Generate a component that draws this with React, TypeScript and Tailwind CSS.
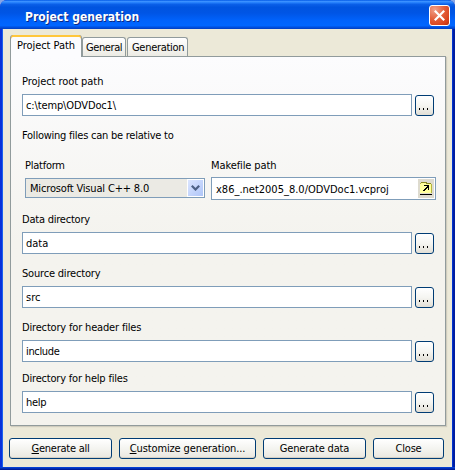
import type { ReactNode } from 'react';

function Label({ children, className = '' }: { children: ReactNode; className?: string }) {
  return <div className={`h-4 whitespace-nowrap pt-px leading-4 ${className}`}>{children}</div>;
}

function BrowseButton() {
  return (
    <button className="flex h-[21px] w-[19px] shrink-0 items-center justify-center gap-[3px] rounded-[3px] border border-[#003c74] bg-linear-to-b from-white via-[#f5f5f1] to-[#e2dfd6] pr-[2px] pt-[7px]">
      <i className="h-[2px] w-px bg-black" />
      <i className="h-[2px] w-px bg-black" />
      <i className="h-[2px] w-px bg-black" />
    </button>
  );
}

function PathField({ label, value, labelClass = '', valueClass = '' }: { label: string; value: string; labelClass?: string; valueClass?: string }) {
  return (
    <div>
      <Label className={labelClass}>{label}</Label>
      <div className="mt-[5px] flex items-end gap-[3px]">
        <div className={`h-[22px] w-[390px] whitespace-nowrap border border-[#7f9db9] bg-white pl-[3px] pt-px leading-[20px] ${valueClass}`}>{value}</div>
        <BrowseButton />
      </div>
    </div>
  );
}

function ActionButton({ children, className }: { children: ReactNode; className: string }) {
  return (
    <button className={`h-[21px] whitespace-nowrap rounded-[3px] border border-[#003c74] bg-linear-to-b from-white via-[#f4f4f0] to-[#e9e7df] text-center leading-[20px] shadow-[inset_0_-1px_0_#d6d0c5] ${className}`}>
      {children}
    </button>
  );
}

export default function App() {
  return (
    <div className="h-[470px] w-[455px] overflow-hidden bg-[#86a5e6] font-['DejaVu_Sans_Condensed','DejaVu_Sans',sans-serif] text-[11px] text-black">
      <div className="flex h-full flex-col overflow-hidden rounded-t-[7px] bg-linear-to-r from-[#0831d9] via-[#0855dd] to-[#001da0]">
        <header className="flex h-[29px] shrink-0 items-start justify-between bg-[linear-gradient(180deg,#0058e6_0%,#3b91ff_5%,#2580fb_9%,#0a5fe8_15%,#0054df_25%,#0055e5_45%,#0062fb_70%,#0066ff_88%,#0050e0_94%,#003dc0_100%)] pl-[25px] pr-[5px]">
          <h1 className="mt-[8px] whitespace-nowrap text-[12px] font-bold leading-[18px] tracking-[0.03px] text-white [text-shadow:1px_1px_#0b2a87]">Project generation</h1>
          <button className="mt-[5px] flex h-[21px] w-[21px] items-center justify-center rounded-[3px] border border-white bg-[radial-gradient(circle_at_25%_20%,#f0a08a,#e3603c_45%,#d8401a_80%,#b5300c)]">
            <svg width="11" height="11" viewBox="0 0 11 11" stroke="white" strokeWidth="2.2">
              <path d="M.8 .8L10.2 10.2M10.2 .8L.8 10.2" />
            </svg>
          </button>
        </header>
        <main className="mx-[3px] flex h-[438px] shrink-0 flex-col bg-[#ece9d8] pl-[6px] pt-[6px] shadow-[-1px_0_#1a60ee,1px_0_#0034d0,0_1px_#0a48e0]">
          <nav className="ml-px flex h-[21px] items-end">
            <div className="relative z-10 -mb-px h-[22px] w-[72px] self-start whitespace-nowrap rounded-t-[3px] border-x border-[#919b9c] bg-[#fcfcfe] pl-[6px] pt-px leading-[20px] tracking-[-0.06px] shadow-[inset_0_2px_#ffc73c,inset_0_1px_#e68b2c]">Project Path</div>
            <div className="h-[19px] w-[44px] whitespace-nowrap rounded-t-[3px] border border-b-0 border-[#919b9c] bg-linear-to-b from-white to-[#ecebe4] pl-[3px] pt-px leading-[18px] tracking-[-0.4px]">General</div>
            <div className="ml-px h-[19px] w-[61px] whitespace-nowrap rounded-t-[3px] border border-b-0 border-[#919b9c] bg-linear-to-b from-white to-[#ecebe4] pl-[4px] pt-px leading-[18px] tracking-[-0.3px]">Generation</div>
          </nav>
          <section className="ml-px h-[370px] w-[436px] border border-[#919b9c] bg-linear-to-b from-[#fcfcfe] to-[#f4f3ee] to-50% pl-[11px] pt-4 shadow-[1px_1px_1px_#cfccbe]">
            <PathField label="Project root path" value={'c:\\temp\\ODVDoc1\\'} labelClass="tracking-[-0.06px]" valueClass="tracking-[-0.13px]" />
            <Label className="mt-[11px] tracking-[-0.24px]">Following files can be relative to</Label>
            <div className="ml-[3px] mt-[14px] flex gap-[6px]">
              <div className="w-[180px]">
                <Label className="tracking-[-0.25px]">Platform</Label>
                <div className="mt-[5px] flex h-[20px] justify-between border border-[#7f9db9] bg-[#ebeae4] pl-[4px] leading-[18px]">
                  <span className="whitespace-nowrap pt-px tracking-[-0.17px]">Microsoft Visual C++ 8.0</span>
                  <span className="flex w-[17px] items-center justify-center border border-white bg-linear-to-br from-[#dce6ff] to-[#afc5f8]">
                    <svg width="9" height="6" viewBox="0 0 9 6" fill="none" stroke="#4d6185" strokeWidth="2.2"><path d="M.8 .8L4.5 4.5L8.2 .8" /></svg>
                  </span>
                </div>
              </div>
              <div className="w-[225px]">
                <Label className="tracking-[-0.1px]">Makefile path</Label>
                <div className="mt-[4px] flex h-[23px] justify-between border border-[#7f9db9] bg-white py-px pl-[4px] pr-px leading-[21px]">
                  <span className="whitespace-nowrap">x86_.net2005_8.0/ODVDoc1.vcproj</span>
                  <span className="bg-[#dedbcf]">
                    <svg width="16" height="19" viewBox="0 0 16 19" shapeRendering="crispEdges">
                      <path d="M2 14V5H3V3H9V5H14V14Z" fill="#ffff9c" />
                      <path d="M3 3H9V4H13V5H8V4H3Z" fill="#8b8b20" />
                      <path d="M2 4H3V5H2ZM13 5H14V14H13Z" fill="#b5b540" />
                      <path d="M2 15H14V16H2Z" fill="#000" />
                      <path d="M6 6H11V11H10V9H9V10H8V11H7V12H5V11H6V10H7V9H8V8H9V7H6Z" fill="#000" />
                    </svg>
                  </span>
                </div>
              </div>
            </div>
            <div className="mt-[11px] flex flex-col">
              <PathField label="Data directory" value="data" labelClass="tracking-[-0.22px]" />
              <div className="mt-[11px]"><PathField label="Source directory" value="src" labelClass="tracking-[-0.19px]" /></div>
              <div className="mt-[11px]"><PathField label="Directory for header files" value="include" labelClass="tracking-[-0.17px]" valueClass="tracking-[-0.35px]" /></div>
              <div className="mt-[8px]"><PathField label="Directory for help files" value="help" labelClass="tracking-[-0.19px]" valueClass="tracking-[-0.3px]" /></div>
            </div>
          </section>
          <footer className="mt-3 flex gap-[7px]">
            <ActionButton className="w-[103px] tracking-[-0.25px]"><u>G</u>enerate all</ActionButton>
            <ActionButton className="w-[137px] tracking-[-0.12px]"><u>C</u>ustomize generation...</ActionButton>
            <ActionButton className="w-[103px] tracking-[-0.18px]">Generate data</ActionButton>
            <ActionButton className="w-[71px] tracking-[-0.2px]">Close</ActionButton>
          </footer>
        </main>
        <div className="h-[3px] shrink-0 bg-linear-to-b from-[#0a48e0] to-[#00138c]" />
      </div>
    </div>
  );
}
